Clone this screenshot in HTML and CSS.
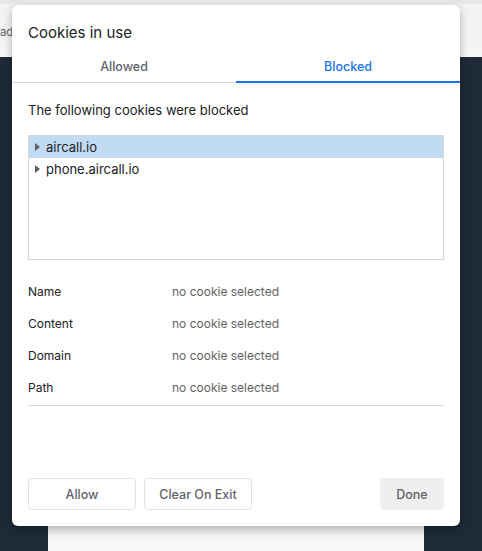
FILE: index.html
```html
<!DOCTYPE html>
<html>
<head>
<meta charset="utf-8">
<link rel="stylesheet" href="styles.css">
</head>
<body>
<div class="toolbar">
  <div class="toolbar-top"></div>
  <div class="toolbar-main"><span class="crumb">ad</span></div>
  <div class="toolbar-bottom"></div>
</div>
<div class="backdrop">
  <div class="page"></div>
</div>

<div class="dialog">
  <div class="title">Cookies in use</div>
  <div class="tabs">
    <div class="tab">Allowed</div>
    <div class="tab active">Blocked</div>
  </div>
  <div class="content">
    <div class="intro">The following cookies were blocked</div>
    <div class="tree">
      <div class="row selected"><span class="caret"></span><span>aircall.io</span></div>
      <div class="row"><span class="caret"></span><span>phone.aircall.io</span></div>
    </div>
    <div class="details">
      <div class="label">Name</div><div class="value">no cookie selected</div>
      <div class="label">Content</div><div class="value">no cookie selected</div>
      <div class="label">Domain</div><div class="value">no cookie selected</div>
      <div class="label">Path</div><div class="value">no cookie selected</div>
    </div>
    <div class="footer">
      <button class="btn">Allow</button>
      <button class="btn">Clear On Exit</button>
      <span class="spacer"></span>
      <button class="btn primary">Done</button>
    </div>
  </div>
</div>
</body>
</html>
```
FILE: styles.css
```css
* { box-sizing: border-box; }
html, body {
  margin: 0;
  padding: 0;
  height: 100%;
}
body {
  font-family: "Inter", "Roboto", "Liberation Sans", sans-serif;
  font-size: 13px;
  color: #202124;
  background: #1e2a38;
  overflow: hidden;
  position: relative;
  display: flex;
  flex-direction: column;
}
.toolbar {
  height: 57px;
  flex: none;
  display: flex;
  flex-direction: column;
}
.toolbar-top {
  height: 4px;
  background: #e7e7e7;
}
.toolbar-main {
  flex: 1;
  background: #f3f3f3;
  display: flex;
  align-items: center;
  padding-top: 12px;
}
.toolbar-bottom {
  height: 9px;
  background: #f6f6f6;
  border-top: 1px solid #fafafa;
}
.crumb {
  color: #5f6368;
  font-size: 11.5px;
  letter-spacing: -0.3px;
}
.backdrop {
  flex: 1;
  display: flex;
  flex-direction: column;
  padding: 30px 58px 0 48px;
}
.page {
  flex: 1;
  background: #f7f7f7;
}

.dialog {
  position: absolute;
  left: 12px;
  top: 5px;
  width: 448px;
  height: 521px;
  background: #fff;
  border-radius: 6px;
  box-shadow: 0 4px 10px rgba(0,0,0,0.28), 0 0 1px rgba(0,0,0,0.2);
  display: flex;
  flex-direction: column;
}
.title {
  padding: 18px 16px 0;
  height: 49px;
  font-size: 15px;
  line-height: 20px;
  color: #202124;
}
.tabs {
  display: flex;
  height: 29px;
  border-bottom: 1px solid #d9d9d9;
}
.tab {
  flex: 1;
  text-align: center;
  line-height: 26px;
  font-size: 12.5px;
  font-weight: 500;
  color: #5f6368;
}
.tab.active {
  color: #1a73e8;
  border-bottom: 2px solid #1a73e8;
  margin-bottom: -1px;
}
.content {
  flex: 1;
  display: flex;
  flex-direction: column;
  padding: 17px 16px 16px;
}
.intro {
  line-height: 20px;
  font-size: 13px;
  color: #202124;
}
.tree {
  margin-top: 15px;
  height: 125px;
  border: 1px solid #d6d6d6;
}
.row {
  height: 22px;
  display: flex;
  align-items: center;
  padding-left: 6px;
  font-size: 13px;
  color: #202124;
}
.row.selected {
  background: #c2dbf5;
}
.caret {
  width: 0;
  height: 0;
  border-top: 4px solid transparent;
  border-bottom: 4px solid transparent;
  border-left: 5px solid #5f5f5f;
  margin-right: 6px;
}
.details {
  margin-top: 16px;
  display: grid;
  grid-template-columns: 144px 1fr;
  grid-auto-rows: 32px;
  align-items: center;
  border-bottom: 1px solid #d9d9d9;
  padding-bottom: 1px;
}
.label {
  font-size: 12px;
  color: #202124;
  margin-top: -2px;
}
.value {
  font-size: 12px;
  color: #5f6368;
  margin-top: -2px;
}
.footer {
  margin-top: auto;
  display: flex;
  gap: 8px;
}
.spacer { flex: 1; }
.btn {
  font-family: inherit;
  font-size: 12.5px;
  font-weight: 500;
  color: #5f6368;
  background: #fff;
  border: 1px solid #e3e3e3;
  border-radius: 4px;
  height: 32px;
  width: 108px;
  padding: 0;
}
.btn.primary {
  width: 64px;
  background: #efefef;
  border-color: #efefef;
}
```
